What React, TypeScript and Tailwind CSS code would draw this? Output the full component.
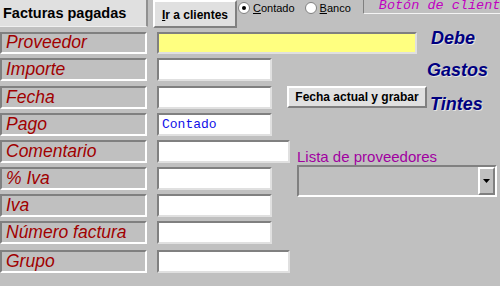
import React from "react";

const sans = "font-['Liberation_Sans',Arial,sans-serif]";
const mono = "font-['Liberation_Mono','Courier_New',monospace]";

function Label({ text }: { text: string }) {
  return (
    <div className="w-[147px] h-full shrink-0 border-2 border-t-[#808080] border-l-[#808080] border-b-white border-r-white bg-[#c0c0c0] flex items-center pl-[4px]">
      <span className={`${sans} italic text-[17.5px] leading-none text-[#a00000] whitespace-nowrap`}>{text}</span>
    </div>
  );
}

function Field({ w, bg = "bg-white", children }: { w: string; bg?: string; children?: React.ReactNode }) {
  return (
    <div className={`${w} h-full shrink-0 ml-[10px] border-2 border-t-[#808080] border-l-[#808080] border-b-[#e0e0e0] border-r-[#e0e0e0] ${bg} flex items-center pl-[2px]`}>
      {children}
    </div>
  );
}

const bigBlue = `${sans} font-bold italic text-[18px] leading-none text-[#000080] [text-shadow:1px_1px_0_#e4e4e4] whitespace-nowrap`;

export default function App() {
  return (
    <div className="w-[500px] h-[286px] bg-[#c0c0c0] overflow-hidden">
      {/* top bar */}
      <div className="flex h-[28px] items-start">
        <div className="w-[148px] h-[27px] shrink-0 bg-[#e0e0e0] border-r-2 border-r-[#909090] border-b border-b-[#f0f0f0] flex items-center pl-[3px]">
          <span className={`${sans} font-bold text-[14.5px] leading-none text-black`}>Facturas pagadas</span>
        </div>
        <div className="ml-[5px] w-[84px] h-[28px] shrink-0 bg-[#e0e0e0] border-2 border-t-white border-l-white border-b-[#808080] border-r-[#808080] flex items-center justify-center pt-[2px]">
          <span className={`${sans} font-bold text-[12px] leading-none text-black whitespace-nowrap`}>
            <span className="underline">I</span>r a clientes
          </span>
        </div>
        <div className="flex items-center h-[16px] ml-[1px]">
          <div className="w-[12px] h-[12px] rounded-full bg-white border border-[#808080] flex items-center justify-center">
            <div className="w-[4px] h-[4px] rounded-full bg-black" />
          </div>
          <span className={`${sans} text-[11px] leading-none text-black ml-[3px]`}>
            <span className="underline">C</span>ontado
          </span>
          <div className="w-[12px] h-[12px] rounded-full bg-white border border-[#808080] ml-[10px]" />
          <span className={`${sans} text-[11px] leading-none text-black ml-[3px]`}>
            <span className="underline">B</span>anco
          </span>
        </div>
        <div className="ml-[12px] flex-1 h-[14px] border-l border-l-[#808080] border-b border-b-[#f4f4f4] pl-[15px] overflow-hidden whitespace-nowrap flex items-start">
          <span className={`${mono} italic text-[13.5px] leading-[12px] text-[#c000c0]`}>Botón de cliente</span>
        </div>
      </div>

      {/* Proveedor */}
      <div className="flex h-[22px] mt-[4px] items-start">
        <Label text="Proveedor" />
        <Field w="w-[260px]" bg="bg-[#ffff80]" />
        <span className={`${bigBlue} ml-[14px] -mt-[3px]`}>Debe</span>
      </div>

      {/* Importe */}
      <div className="flex h-[23px] mt-[4px] items-start">
        <Label text="Importe" />
        <Field w="w-[115px]" />
        <span className={`${bigBlue} ml-[155px] mt-[3px]`}>Gastos</span>
      </div>

      {/* Fecha */}
      <div className="flex h-[23px] mt-[5px] items-start">
        <Label text="Fecha" />
        <Field w="w-[115px]" />
        <div className="ml-[15px] w-[140px] h-[22px] shrink-0 bg-[#e0e0e0] border-2 border-t-white border-l-white border-b-[#808080] border-r-[#808080] flex items-center justify-center">
          <span className={`${sans} font-bold text-[12px] leading-none text-black whitespace-nowrap`}>Fecha actual y grabar</span>
        </div>
        <span className={`${bigBlue} ml-[3px] mt-[9px]`}>Tintes</span>
      </div>

      {/* Pago */}
      <div className="flex h-[23px] mt-[4px] items-start">
        <Label text="Pago" />
        <Field w="w-[115px]">
          <span className={`${mono} text-[13px] leading-none text-[#1010e8] ml-[1px]`}>Contado</span>
        </Field>
      </div>

      {/* Comentario */}
      <div className="flex h-[23px] mt-[4px] items-start">
        <Label text="Comentario" />
        <Field w="w-[133px]" />
        <span className={`${sans} text-[15px] leading-none text-[#a000a0] ml-[7px] mt-[9px] whitespace-nowrap`}>Lista de proveedores</span>
      </div>

      {/* % Iva */}
      <div className="flex h-[23px] mt-[4px] items-start">
        <Label text="% Iva" />
        <Field w="w-[115px]" />
        <div className="ml-[25px] -mt-[2px] w-[200px] h-[32px] shrink-0 border-2 border-t-[#808080] border-l-[#808080] border-b-white border-r-white bg-[#c0c0c0] flex justify-end p-0">
          <div className="w-[17px] h-full bg-[#c0c0c0] border-2 border-t-white border-l-white border-b-[#808080] border-r-[#808080] flex items-center justify-center">
            <svg width="7" height="4" viewBox="0 0 7 4"><path d="M0 0h7L3.5 4z" fill="#000" /></svg>
          </div>
        </div>
      </div>

      {/* Iva */}
      <div className="flex h-[23px] mt-[4px] items-start">
        <Label text="Iva" />
        <Field w="w-[115px]" />
      </div>

      {/* Número factura */}
      <div className="flex h-[23px] mt-[4px] items-start">
        <Label text="Número factura" />
        <Field w="w-[115px]" />
      </div>

      {/* Grupo */}
      <div className="flex h-[23px] mt-[6px] items-start">
        <Label text="Grupo" />
        <Field w="w-[133px]" />
      </div>
    </div>
  );
}
